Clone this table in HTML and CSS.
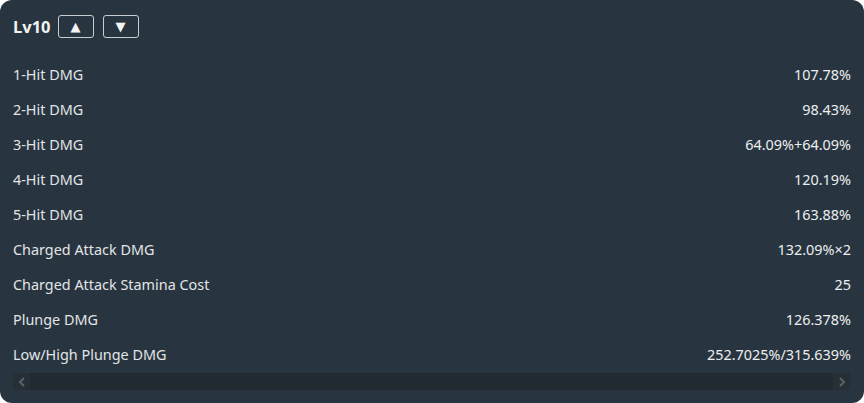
FILE: index.html
```html
<!DOCTYPE html>
<html lang="en">
<head>
  <meta charset="UTF-8" />
  <title>Talent Scaling</title>
  <link rel="stylesheet" href="styles.css">
</head>
<body>

  <div class="card">
    <!-- Level header -->
    <div class="level-bar">
      <span class="level">Lv10</span>
      <button class="lvl-btn">&#9650;</button>
      <button class="lvl-btn">&#9660;</button>
    </div>

    <!-- Scaling table -->
    <div class="table">
      <div class="row"><span class="label">1-Hit DMG</span><span class="value">107.78%</span></div>
      <div class="row"><span class="label">2-Hit DMG</span><span class="value">98.43%</span></div>
      <div class="row"><span class="label">3-Hit DMG</span><span class="value">64.09%+64.09%</span></div>
      <div class="row"><span class="label">4-Hit DMG</span><span class="value">120.19%</span></div>
      <div class="row"><span class="label">5-Hit DMG</span><span class="value">163.88%</span></div>
      <div class="row"><span class="label">Charged Attack DMG</span><span class="value">132.09%×2</span></div>
      <div class="row"><span class="label">Charged Attack Stamina Cost</span><span class="value">25</span></div>
      <div class="row"><span class="label">Plunge DMG</span><span class="value">126.378%</span></div>
      <div class="row"><span class="label">Low/High Plunge DMG</span><span class="value">252.7025%/315.639%</span></div>
    </div>

    <div class="scrollbar">
      <span class="scroll-arrow">
        <svg width="8" height="10" viewBox="0 0 8 10"><path d="M6 1 L2 5 L6 9" fill="none" stroke="#5c6368" stroke-width="2"/></svg>
      </span>
      <span class="scroll-arrow">
        <svg width="8" height="10" viewBox="0 0 8 10"><path d="M2 1 L6 5 L2 9" fill="none" stroke="#5c6368" stroke-width="2"/></svg>
      </span>
    </div>
  </div>

</body>
</html>
```

FILE: styles.css
```css
body {
  margin: 0;
  background: #fff;
  font-family: "Noto Sans", "Open Sans", sans-serif;
}
.card {
  width: 864px;
  height: 403px;
  box-sizing: border-box;
  background: #283540;
  border-radius: 12px;
  padding: 15px 13px 0 13px;
  color: #e6e8ea;
}
.level-bar {
  display: flex;
  align-items: center;
  height: 23px;
}
.level {
  font-weight: bold;
  font-size: 16.5px;
  color: #f2f2f2;
  margin-right: 7px;
}
.lvl-btn {
  width: 36px;
  height: 23px;
  margin-right: 9px;
  padding: 0;
  background: transparent;
  border: 1px solid #c9cdd0;
  border-radius: 3px;
  color: #f4f4f4;
  font-size: 13px;
  line-height: 20px;
  font-family: "DejaVu Sans", sans-serif;
}
.table {
  margin-top: 19px;
}
.row {
  display: flex;
  justify-content: space-between;
  align-items: center;
  height: 35px;
  font-size: 14.4px;
}
.label {
  color: #e2e4e6;
}
.value {
  color: #eceeef;
}
.scrollbar {
  display: flex;
  justify-content: space-between;
  height: 17px;
  margin-top: 1px;
  margin-right: 1px;
  background: #212a31;
}
.scroll-arrow {
  width: 17px;
  display: flex;
  align-items: center;
  justify-content: center;
  background: #262f35;
}
```
